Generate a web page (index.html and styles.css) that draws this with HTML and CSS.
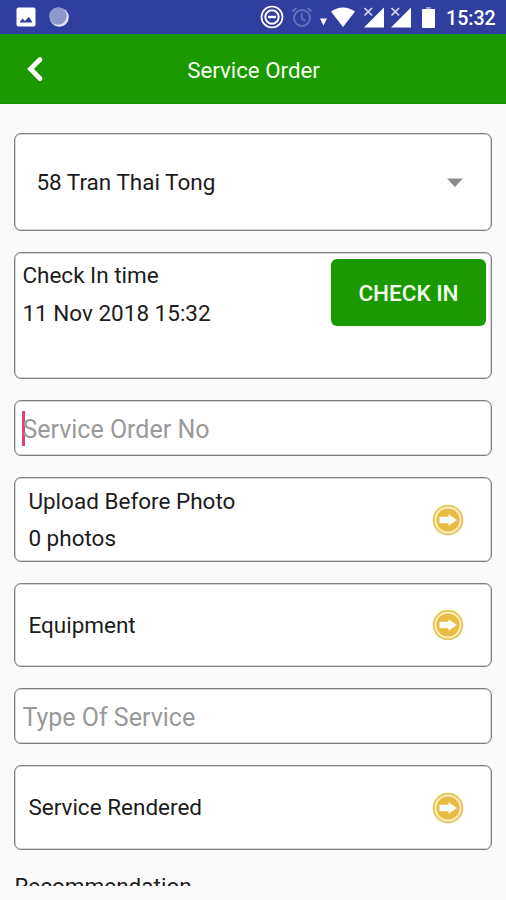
FILE: index.html
```html
<!DOCTYPE html>
<html lang="en">
<head>
<meta charset="utf-8">
<title>Service Order</title>
<link rel="stylesheet" href="styles.css">
</head>
<body>
<svg class="defs" width="0" height="0">
  <symbol id="go" viewBox="0 0 32 32">
    <circle cx="16" cy="16" r="14.300" fill="#fdf3c8" stroke="#eac65a" stroke-width="2"/>
    <circle cx="16" cy="16" r="11.600" fill="#e9bd43"/>
    <path d="M7.500 12.700h9V10.300l8.500 5.700-8.500 5.700V19.300h-9z" fill="#fff"/>
  </symbol>
  <symbol id="signal" viewBox="0 0 22 22">
    <path d="M21 1.500v20H1z" fill="#fff"/>
    <path d="M1.500 2l7.500 7.500M9 2L1.500 9.500" stroke="#d5d9f2" stroke-width="1.700" fill="none"/>
  </symbol>
</svg>
<header class="status">
  <svg class="photo" viewBox="0 0 20 20"><rect x=".5" y=".5" width="19" height="19" rx="2" fill="#fff"/><path d="M3.500 15.500l3-4 2.500 2.500 3.800-4.200L16.500 15.500z" fill="#303f9f"/></svg>
  <svg class="moon" viewBox="0 0 20 20"><circle cx="10.300" cy="10.300" r="9.500" fill="#e4e7fa"/><circle cx="9" cy="9" r="8.800" fill="#8f98cb"/></svg>
  <span class="spacer"></span>
  <svg class="dnd" viewBox="0 0 24 24" fill="none" stroke="#fff"><circle cx="12" cy="12" r="10.500" stroke-width="1.700"/><circle cx="12" cy="12" r="6.700" stroke-width="2"/><path d="M8 12h8" stroke-width="2.400"/></svg>
  <svg class="alarm" viewBox="0 0 22 22" fill="none" stroke="#6670ba" stroke-width="1.900"><circle cx="11" cy="12" r="8"/><path d="M10.800 7v5.500l4 2.500M1.500 5.500l4-3.500M20.500 5.500l-4-3.500"/></svg>
  <svg class="wifi" viewBox="0 0 36 22"><path d="M0 12.500h7L3.500 19.500z" fill="#fff"/><path d="M11 5.500Q23-2.500 35 5.500L23 21z" fill="#fff"/></svg>
  <svg class="signal"><use href="#signal"/></svg>
  <svg class="signal second"><use href="#signal"/></svg>
  <svg class="battery" viewBox="0 0 13 21"><path d="M4 0h5v2.500H4z" fill="#8f98d0"/><rect y="2" width="13" height="19" rx="1" fill="#fff"/></svg>
  <span class="clock">15:32</span>
</header>
<nav class="bar">
  <svg class="back" viewBox="0 0 18 28"><path d="M14 4.500L4.500 14l9.500 9.500" fill="none" stroke="#fff" stroke-width="4.800" stroke-linecap="round"/></svg>
  <h1 class="title">Service Order</h1>
</nav>
<main class="form">
  <section class="card select">
    <span class="t-address">58 Tran Thai Tong</span>
    <svg class="caret" viewBox="0 0 16 9"><path d="M0 .5h16L8 9z" fill="#8c8c8c"/></svg>
  </section>
  <section class="card checkin">
    <div class="lines">
      <p class="t-label">Check In time</p>
      <p class="t-date">11 Nov 2018 15:32</p>
    </div>
    <button class="button"><span class="t-button">CHECK IN</span></button>
  </section>
  <section class="card field">
    <span class="cursor"></span><span class="t-order">Service Order No</span>
  </section>
  <section class="card link">
    <div class="lines">
      <p class="t-upload">Upload Before Photo</p>
      <p class="t-count">0 photos</p>
    </div>
    <svg class="go"><use href="#go"/></svg>
  </section>
  <section class="card link">
    <span class="t-equipment">Equipment</span>
    <svg class="go"><use href="#go"/></svg>
  </section>
  <section class="card field">
    <span class="t-type">Type Of Service</span>
  </section>
  <section class="card link">
    <span class="t-rendered">Service Rendered</span>
    <svg class="go"><use href="#go"/></svg>
  </section>
  <div class="next"><span class="t-next">Recommendation</span></div>
</main>
</body>
</html>
```
FILE: styles.css
```css
* { box-sizing: border-box; }
body {
  margin: 0;
  width: 506px;
  height: 900px;
  overflow: hidden;
  background: #fafafa;
  color: #1c1c1c;
  font: 22.5px/37.5px Roboto, sans-serif;
}
p, h1 { margin: 0; }
svg { display: block; flex: none; }
.defs { position: absolute; }
.spacer { flex: 1; }

.status {
  display: flex;
  align-items: center;
  height: 34px;
  padding: 0 11px 0 16px;
  background: #303f9f;
}
.photo { width: 20px; height: 20px; }
.moon { width: 20px; height: 20px; margin-left: 13px; }
.dnd { width: 24px; height: 24px; }
.alarm { width: 22px; height: 22px; margin-left: 7px; }
.wifi { width: 36px; height: 22px; margin-left: 7px; }
.signal { width: 22px; height: 22px; margin-left: 7px; }
.second { margin-left: 5px; }
.battery { width: 13px; height: 21px; margin-left: 10px; }
.clock {
  width: 49px;
  margin-left: 11px;
  padding-top: 3px;
  color: #fff;
  font-size: 19.600px;
  font-weight: 500;
  white-space: nowrap;
}

.bar {
  display: grid;
  grid-template-columns: 90px 1fr 90px;
  align-items: center;
  height: 70px;
  background: #1c9900;
  border-bottom: 1px solid #169000;
}
.back { width: 18px; height: 28px; margin-left: 26px; }
.title {
  padding: 4px 0 0 1px;
  color: #f4fff0;
  font-size: 22.300px;
  font-weight: 400;
  text-align: center;
}

.form {
  display: flex;
  flex-direction: column;
  gap: 21px;
  padding: 28.5px 14px 0 14.400px;
}
.card {
  display: flex;
  background: #fff;
  border: 1px solid #808080;
  border-radius: 7px;
  box-shadow: inset 0 0 0 .5px #aaa;
}
.select { height: 98.500px; align-items: center; justify-content: space-between; padding: 2px 28px 0 21px; }
.caret { width: 16px; height: 9px; }
.checkin { height: 127px; justify-content: space-between; padding: 4px 5px 0 7px; }
.button {
  width: 155px;
  height: 67px;
  margin-top: 2px;
  padding: 2px 0 0;
  border: 0;
  border-radius: 6px;
  background: #1c9900;
  color: #f4fff0;
  font: 500 22.500px/65px Roboto, sans-serif;
}
.field { height: 56px; align-items: center; padding: 3px 0 0 7px; color: #999; font-size: 25px; }
.cursor { width: 3px; height: 35px; margin: -3px -3px 0 0; background: #e0407c; }
.link { height: 84.500px; align-items: center; justify-content: space-between; padding: 1px 27px 0 13px; }
.lines { padding-top: 1px; }
.checkin .lines { padding-top: 0; }
.go { width: 32px; height: 32px; }
.next { height: 15.500px; overflow: hidden; line-height: 31px; }
[class^="t-"] { white-space: nowrap; }
```
